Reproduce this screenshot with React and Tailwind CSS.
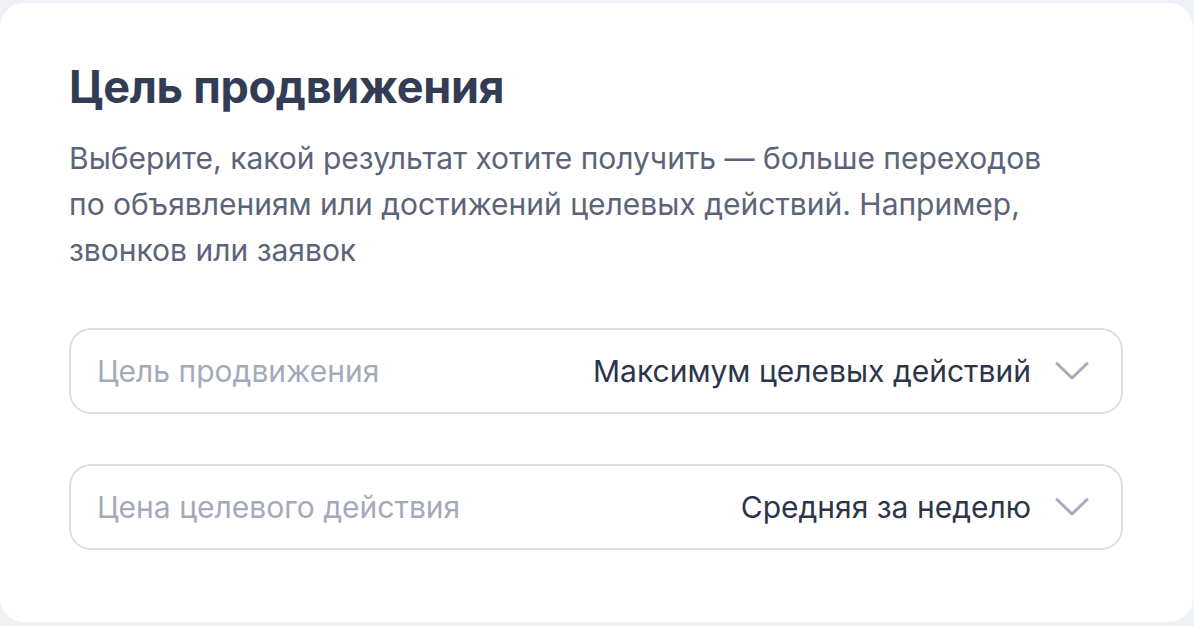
import React from 'react';

const FIELDS = [
  { label: 'Цель продвижения', value: 'Максимум целевых действий' },
  { label: 'Цена целевого действия', value: 'Средняя за неделю' },
];

function Chevron() {
  return (
    <svg width="34" height="20" viewBox="0 0 34 20" fill="none" className="shrink-0">
      <path d="M2 2.5 L17 17 L32 2.5" stroke="#a5acbd" strokeWidth="3" strokeLinecap="round" strokeLinejoin="round" />
    </svg>
  );
}

function SelectField({ label, value }) {
  return (
    <div className="flex items-center h-[86px] border-2 border-[#dadee7] rounded-[22px] pl-[26px] pr-[32px]">
      <span className="text-[30px] text-[#a3aabc] whitespace-nowrap">{label}</span>
      <span className="ml-auto text-[30px] text-[#2c3549] whitespace-nowrap">{value}</span>
      <span className="ml-[24px] flex items-center"><Chevron /></span>
    </div>
  );
}

export default function App() {
  return (
    <div className="w-[1194px] h-[626px] bg-[#eef1f6] pt-[3px] pr-[1px] overflow-hidden" style={{ fontFamily: 'Inter, "Noto Sans", sans-serif' }}>
      <div className="h-[619px] bg-white rounded-[24px] pl-[69px] pr-[70px] pt-[56px]">
        <h1 className="text-[45px] leading-[56px] font-bold text-[#323c54] tracking-[-0.3px]">Цель продвижения</h1>
        <p className="mt-[20px] text-[30px] leading-[46px] text-[#5b6479] whitespace-nowrap">
          Выберите, какой результат хотите получить — больше переходов<br />
          по объявлениям или достижений целевых действий. Например,<br />
          звонков или заявок
        </p>
        <div className="mt-[55px] flex flex-col gap-[50px]">
          {FIELDS.map((f) => (
            <SelectField key={f.label} label={f.label} value={f.value} />
          ))}
        </div>
      </div>
    </div>
  );
}
